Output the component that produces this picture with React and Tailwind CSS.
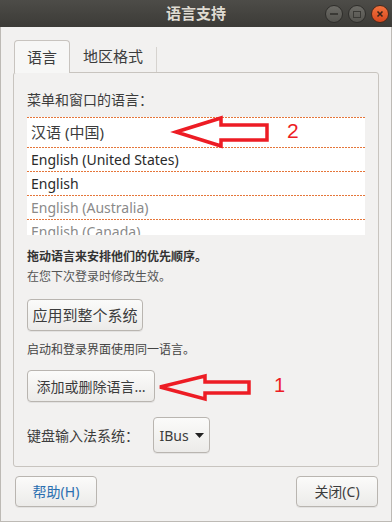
import React from "react";

const font = { fontFamily: '"Noto Sans", "Noto Sans CJK SC", sans-serif' };

function Dots() {
  return <div className="h-px w-full shrink-0 bg-[repeating-linear-gradient(90deg,#e5763a_0_2px,transparent_2px_3px)]" />;
}

function Row({ children, className = "", h = "h-[23px]" }) {
  return (
    <div className="flex flex-col shrink-0">
      <Dots />
      <div className={`${h} flex items-center pl-[4px] ${className}`}>{children}</div>
    </div>
  );
}

function Btn({ children, className = "" }) {
  return (
    <div
      className={`flex items-center justify-center rounded-[4px] border border-[#b9b5b0] bg-gradient-to-b from-[#fbfbfa] to-[#ecebe9] shadow-[0_1px_0_rgba(0,0,0,0.06)] ${className}`}
    >
      {children}
    </div>
  );
}

function TitleButton({ children, close }) {
  return (
    <div
      className={`w-[18px] h-[18px] rounded-full flex items-center justify-center border ${
        close
          ? "bg-gradient-to-b from-[#f2733e] to-[#d8471e] border-[#4a2a1c]"
          : "bg-gradient-to-b from-[#6c6b66] to-[#55544f] border-[#2f2e2b]"
      }`}
    >
      {children}
    </div>
  );
}

export default function App() {
  return (
    <div
      className="relative w-[392px] h-[522px] bg-[#f2f1f0] flex flex-col text-[#3c3c3c] overflow-hidden"
      style={font}
    >
      {/* title bar */}
      <div className="h-[27px] bg-gradient-to-b from-[#4d4c48] to-[#3c3b37] flex items-center relative shrink-0">
        <div className="w-full text-center text-[15px] font-bold text-[#dfdbd2] leading-none">语言支持</div>
        <div className="absolute right-[3px] top-[5px] flex gap-[5px]">
          <TitleButton>
            <div className="w-[8px] h-[2px] bg-[#3a3935]" />
          </TitleButton>
          <TitleButton>
            <div className="w-[8px] h-[7px] border-[1.5px] border-[#3a3935]" />
          </TitleButton>
          <TitleButton close>
            <svg width="8" height="8" viewBox="0 0 8 8">
              <path d="M1.5 1.5L6.5 6.5M6.5 1.5L1.5 6.5" stroke="#3a2419" strokeWidth="1.6" />
            </svg>
          </TitleButton>
        </div>
      </div>

      <div className="flex-1 flex flex-col border-x border-b border-[#bdbab5] px-[12px]">
        {/* tabs */}
        <div className="mt-[13px] flex items-end h-[32px] pl-[1px]">
          <div className="w-[56px] h-[33px] -mb-px z-10 rounded-t-[4px] border border-b-0 border-[#c8c4bf] bg-[#f7f7f6] flex items-center justify-center text-[15px]">
            语言
          </div>
          <div className="w-[86px] h-[32px] flex items-center justify-center text-[15px]">地区格式</div>
          <div className="w-px h-[25px] bg-[#d6d3cf]" />
        </div>

        {/* panel */}
        <div className="h-[395px] rounded-[3px] border border-[#c8c4bf] bg-[#f2f1f0] flex flex-col px-[13px]">
          <div className="mt-[16px] h-[20px] flex items-center text-[14px]">菜单和窗口的语言：</div>
          <div className="mt-[8px] h-[118px] bg-white overflow-hidden flex flex-col w-[338px]">
            <Row h="h-[29px]" className="text-[15px] text-[#3c3c3c]">汉语 (中国)</Row>
            <Row className="text-[14px] text-[#2a2a2a]">English (United States)</Row>
            <Row className="text-[14px] text-[#2a2a2a]">English</Row>
            <Row className="text-[14px] text-[#8a8a8a]">English (Australia)</Row>
            <Row className="text-[14px] text-[#8a8a8a]">English (Canada)</Row>
          </div>
          <div className="mt-[13px] h-[18px] flex items-center text-[12px] font-bold text-[#333]">
            拖动语言来安排他们的优先顺序。
          </div>
          <div className="mt-[2px] h-[18px] flex items-center text-[12px] text-[#555]">在您下次登录时修改生效。</div>
          <Btn className="mt-[13px] w-[116px] h-[32px] text-[15px]">应用到整个系统</Btn>
          <div className="mt-[10px] h-[18px] flex items-center text-[12px] text-[#444]">
            启动和登录界面使用同一语言。
          </div>
          <Btn className="mt-[11px] w-[128px] h-[32px] text-[14px]">添加或删除语言…</Btn>
          <div className="mt-[15px] flex items-center">
            <div className="w-[126px] text-[14px]">键盘输入法系统：</div>
            <Btn className="w-[57px] h-[36px] text-[14px] gap-[6px]">
              <span className="text-[#3c3c3c]">IBus</span>
              <svg width="9" height="5" viewBox="0 0 9 5">
                <path d="M0 0H9L4.5 5Z" fill="#222" />
              </svg>
            </Btn>
          </div>
        </div>

        {/* bottom buttons */}
        <div className="mt-[9px] flex justify-between pl-[2px] pr-[1px]">
          <Btn className="w-[82px] h-[31px] text-[14px] text-[#2a6fb0]">帮助(H)</Btn>
          <Btn className="w-[82px] h-[31px] text-[14px]">关闭(C)</Btn>
        </div>
      </div>

      {/* annotations */}
      <svg className="absolute left-0 top-0 pointer-events-none" width="392" height="522">
        <path
          d="M176 132 L221 118 L221 125 L267 125 L267 140 L221 140 L221 146 Z"
          fill="none"
          stroke="#ed1c24"
          strokeWidth="3.5"
          strokeLinejoin="miter"
        />
        <path
          d="M160 387 L205 376 L205 382 L249 382 L249 393 L205 393 L205 399 Z"
          fill="none"
          stroke="#ed1c24"
          strokeWidth="3.5"
          strokeLinejoin="miter"
        />
      </svg>
      <div className="absolute left-[287px] top-[120px] text-[21px] leading-none text-[#ed1c24]" style={{ fontFamily: '"Liberation Sans", sans-serif' }}>
        2
      </div>
      <div className="absolute left-[274px] top-[375px] text-[20px] leading-none text-[#ed1c24]" style={{ fontFamily: '"Liberation Sans", sans-serif' }}>
        1
      </div>
    </div>
  );
}
